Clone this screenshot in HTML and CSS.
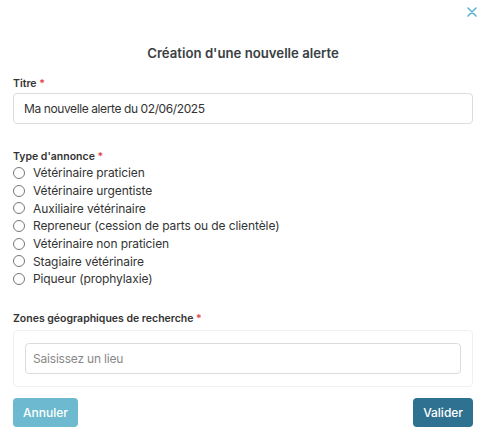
FILE: index.html
```html
<!DOCTYPE html>
<html lang="fr">
<head>
    <meta charset="UTF-8" />
    <title>Création d'une nouvelle alerte</title>
    <link rel="stylesheet" href="styles.css">
</head>
<body>
    <div class="modal">
        <div class="modal-top">
            <button class="btn-close" aria-label="Fermer">
                <svg width="10" height="10" viewBox="0 0 10 10"><path d="M1 1L9 9M9 1L1 9" stroke="#5bb3d1" stroke-width="1.6" stroke-linecap="round"/></svg>
            </button>
        </div>

        <h2 class="modal-title">Création d'une nouvelle alerte</h2>

        <div class="field">
            <label class="field-label" for="titre">Titre <span class="req">*</span></label>
            <input class="text-input" id="titre" type="text" value="Ma nouvelle alerte du 02/06/2025">
        </div>

        <div class="field field-type">
            <div class="field-label">Type d'annonce <span class="req">*</span></div>
            <div class="radio-list">
                <label class="radio-row"><input type="radio" name="type"><span>Vétérinaire praticien</span></label>
                <label class="radio-row"><input type="radio" name="type"><span>Vétérinaire urgentiste</span></label>
                <label class="radio-row"><input type="radio" name="type"><span>Auxiliaire vétérinaire</span></label>
                <label class="radio-row"><input type="radio" name="type"><span>Repreneur (cession de parts ou de clientèle)</span></label>
                <label class="radio-row"><input type="radio" name="type"><span>Vétérinaire non praticien</span></label>
                <label class="radio-row"><input type="radio" name="type"><span>Stagiaire vétérinaire</span></label>
                <label class="radio-row"><input type="radio" name="type"><span>Piqueur (prophylaxie)</span></label>
            </div>
        </div>

        <div class="field field-zones">
            <div class="field-label">Zones géographiques de recherche <span class="req">*</span></div>
            <div class="zones-box">
                <input class="text-input lieu-input" type="text" placeholder="Saisissez un lieu">
            </div>
        </div>

        <div class="actions">
            <button class="btn btn-cancel">Annuler</button>
            <button class="btn btn-submit">Valider</button>
        </div>
    </div>
</body>
</html>
```

FILE: styles.css
```css
body {
    margin: 0;
    font-family: Inter, "Noto Sans", sans-serif;
    color: #333;
    background: #fff;
}
.modal {
    padding: 0 13px;
}
.modal-top {
    display: flex;
    justify-content: flex-end;
    height: 24px;
    align-items: center;
}
.btn-close {
    border: none;
    background: none;
    padding: 0;
    margin-right: -4px;
    display: flex;
    cursor: pointer;
}
.modal-title {
    text-align: center;
    font-size: 13.2px;
    font-weight: 600;
    color: #3a3f44;
    margin: 21px 0 16px;
}
.field-label {
    display: block;
    font-size: 10.5px;
    font-weight: 600;
    color: #333;
    margin-bottom: 3px;
}
.req {
    color: #e04848;
}
.text-input {
    display: block;
    box-sizing: border-box;
    width: 100%;
    height: 31px;
    padding: 0 10px;
    border: 1px solid #dcdcdc;
    border-radius: 4px;
    font-family: inherit;
    font-size: 12px;
    letter-spacing: -0.4px;
    color: #333;
}
.text-input::placeholder {
    color: #888;
}
.lieu-input {
    padding: 0 7px;
    letter-spacing: -0.2px;
}
.field-type {
    margin-top: 26px;
}
.field-type .field-label {
    margin-bottom: 1px;
}
.radio-list {
    display: flex;
    flex-direction: column;
}
.radio-row {
    display: flex;
    align-items: center;
    height: 17.7px;
    font-size: 12px;
    letter-spacing: -0.1px;
    color: #333;
}
.radio-row input {
    appearance: none;
    width: 12px;
    height: 12px;
    border: 1px solid #777;
    border-radius: 50%;
    margin: 0 8px 0 0;
}
.field-zones {
    margin-top: 24px;
}
.field-zones .field-label {
    margin-bottom: 5px;
}
.zones-box {
    border: 1px solid #f0f0f0;
    border-radius: 4px;
    padding: 12px 11px;
}
.actions {
    display: flex;
    justify-content: space-between;
    margin-top: 11px;
}
.btn {
    border: none;
    border-radius: 4px;
    height: 29px;
    padding: 0 10px;
    font-family: inherit;
    font-size: 12px;
    font-weight: 500;
    color: #fff;
    cursor: pointer;
}
.btn-cancel {
    background: #6db9cf;
}
.btn-submit {
    background: #2f7191;
}
```
